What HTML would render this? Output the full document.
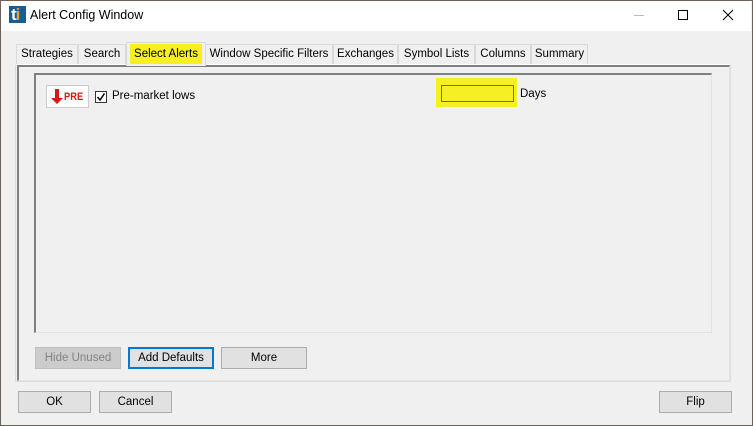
<!DOCTYPE html>
<html><head><style>
*{margin:0;padding:0;box-sizing:border-box}
body{width:753px;height:426px;overflow:hidden;background:#f0f0f0;font-family:"Liberation Sans",sans-serif;font-size:11.5px;color:#000;position:relative}
.a{position:absolute}
.tab{position:absolute;top:44px;height:20px;border:1px solid #d9d9d9;border-bottom:none;background:#f0f0f0;line-height:18px;text-align:center;font-size:11.5px;white-space:nowrap}
.btn{position:absolute;height:22px;border:1px solid #adadad;background:#e1e1e1;text-align:center;line-height:20px;font-size:11.5px}
</style></head><body>
<div class="a" style="left:0;top:0;width:753px;height:426px;border:1px solid #6b6259"></div>
<div class="a" style="left:1px;top:1px;width:750px;height:30px;background:#fff"></div>
<div class="a" style="left:9px;top:6px;width:17px;height:17px;background:#1c5c8c"></div>
<div class="a" style="left:11px;top:5px;font:bold 17px 'Liberation Sans';color:#fff;letter-spacing:-1px">t<span style="color:#f0a020">i</span></div>
<div class="a" style="left:30px;top:8px;font-size:12.5px">Alert Config Window</div>
<div class="a" style="left:634px;top:15px;width:10px;height:1px;background:#bbb"></div>
<div class="a" style="left:678px;top:10px;width:10px;height:10px;border:1px solid #000"></div>
<svg class="a" style="left:722px;top:9px" width="12" height="12"><path d="M1 1L11 11M11 1L1 11" stroke="#000" stroke-width="1"/></svg>

<div class="tab" style="left:16px;width:62px">Strategies</div>
<div class="tab" style="left:78px;width:48px">Search</div>
<div class="tab" style="left:205px;width:128px">Window Specific Filters</div>
<div class="tab" style="left:333px;width:65px">Exchanges</div>
<div class="tab" style="left:398px;width:77px">Symbol Lists</div>
<div class="tab" style="left:475px;width:56px">Columns</div>
<div class="tab" style="left:531px;width:57px">Summary</div>
<div class="tab" style="left:126px;top:42px;width:80px;height:24px;background:#f0f0f0;border-color:#d9d9d9;z-index:2"><span style="background:#f7ee24;padding:2px 4px;display:inline-block;line-height:16px;margin-top:1px">Select Alerts</span></div>

<div class="a" style="left:15px;top:64px;width:716px;height:318px;border:1px solid #dcdcdc;border-top-color:#fff"></div>
<div class="a" style="left:17px;top:65px;width:713px;height:316px;border-top:2px solid #808080;border-left:2px solid #808080;border-right:1px solid #e3e3e3;border-bottom:1px solid #e3e3e3"></div>
<div class="a" style="left:34px;top:73px;width:678px;height:260px;border-top:2px solid #808080;border-left:2px solid #808080;border-right:1px solid #e3e3e3;border-bottom:1px solid #e3e3e3"></div>

<div class="a" style="left:46px;top:85px;width:43px;height:23px;background:#fff;border:1px solid #ccc"></div>
<svg class="a" style="left:51px;top:89px" width="12" height="16"><path d="M4 0h4v9h4l-6 6-6-6h4z" fill="#d81818"/></svg>
<div class="a" style="left:64px;top:91px;font:bold 11px 'Liberation Sans';color:#d81818;transform:scaleX(0.85);transform-origin:left">PRE</div>
<div class="a" style="left:95px;top:91px;width:12px;height:12px;border:1px solid #333;background:#fff"></div>
<svg class="a" style="left:96px;top:92px" width="10" height="10"><path d="M1.5 5l2.5 3 4.5-6.5" stroke="#000" stroke-width="1.5" fill="none"/></svg>
<div class="a" style="left:112px;top:90px">Pre-market lows</div>

<div class="a" style="left:436px;top:78px;width:81px;height:29px;background:#f7ee24"></div>
<div class="a" style="left:441px;top:85px;width:73px;height:17px;border:1px solid #7a7020;background:#f7ee24"></div>
<div class="a" style="left:520px;top:88px">Days</div>

<div class="btn" style="left:35px;top:347px;width:86px;background:#cccccc;border-color:#bfbfbf;color:#838383">Hide Unused</div>
<div class="btn" style="left:128px;top:347px;width:86px;border:2px solid #0078d7;line-height:18px">Add Defaults</div>
<div class="btn" style="left:221px;top:347px;width:86px">More</div>
<div class="btn" style="left:18px;top:391px;width:73px">OK</div>
<div class="btn" style="left:99px;top:391px;width:73px">Cancel</div>
<div class="btn" style="left:659px;top:391px;width:73px">Flip</div>
</body></html>
